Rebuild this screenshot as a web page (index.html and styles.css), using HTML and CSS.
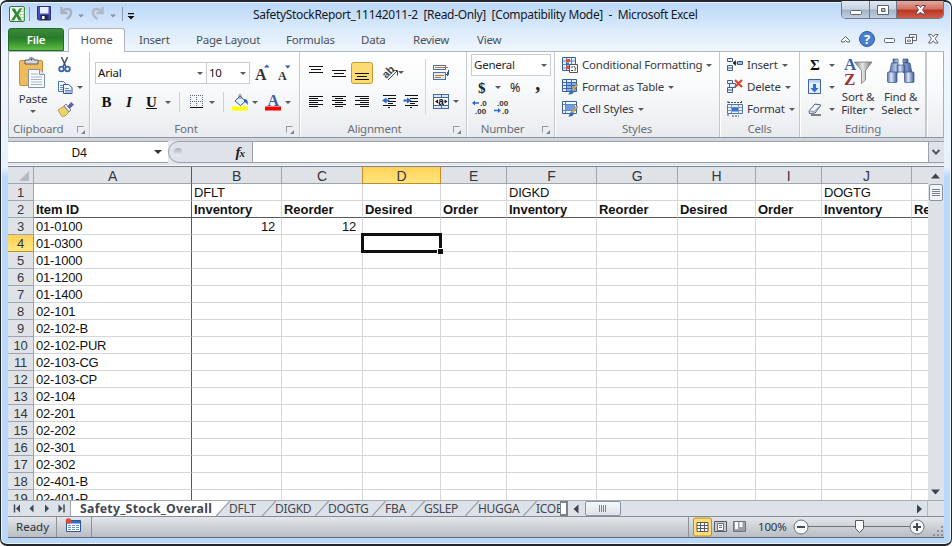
FILE: index.html
```html
<!DOCTYPE html>
<html lang="en">
<head>
<meta charset="utf-8">
<title>SafetyStockReport_11142011-2</title>
<link rel="stylesheet" href="styles.css">
</head>
<body>
<div class="window">
  <header class="titlebar">
    <div class="quick">
      <svg width="128" height="24" viewBox="0 0 128 24">
        <rect x="1.500" y="3.500" width="15" height="15" rx="1.500" fill="#f3faef" stroke="#2f7d32"/>
        <path d="M12 6h4v11h-4z" fill="#fff" stroke="#8dbb86" stroke-width=".7"/>
        <path d="M12 8.500h4M12 11.500h4M12 14.500h4" stroke="#8dbb86" stroke-width=".7"/>
        <path d="M3.500 5.500h3.500l2 4 2.500-4h2.500l-3.500 6 3.500 6h-3.500l-2-4-2.500 4h-3l4-6z" fill="#318a36"/>
        <path d="M21.500 4v14" stroke="#8c99a8"/>
        <path d="M29.500 3.500h13v13.500h-12l-1-1z" fill="#4650b4" stroke="#2d3382"/>
        <path d="M32 4h8.500v6.500h-8.500z" fill="#e8f0fb"/><path d="M32.500 12h8v5h-8z" fill="#26294f"/><path d="M34 13h2.500v3h-2.500z" fill="#fff"/>
        <path d="M53.500 4v6h6M54 9.500c3-5 9-4.500 9 0 0 3-2 5-4.500 6.500" fill="none" stroke="#a9b2be" stroke-width="2.500"/>
        <path d="M70 11.500h6l-3 3z" fill="#8593a5"/>
        <path d="M94.500 4v6h-6M94 9.500c-3-5-9-4.500-9 0 0 3 2 5 4.500 6.500" fill="none" stroke="#b2bac5" stroke-width="2.500"/>
        <path d="M102 11.500h6l-3 3z" fill="#8593a5"/>
        <path d="M114.500 4v14" stroke="#8c99a8"/>
        <path d="M120 10h6v1.300h-6zM119.500 13h7l-3.500 3.500z" fill="#111"/>
      </svg>
    </div>
    <h1><span class="t-title">SafetyStockReport_11142011-2&nbsp; [Read-Only]&nbsp; [Compatibility Mode]&nbsp; -&nbsp; Microsoft Excel</span></h1>
    <div class="winbtns">
      <button class="wb"><svg width="27" height="18"><rect x="8.500" y="9.500" width="11" height="4" rx="1" fill="#fff" stroke="#5b6474"/></svg></button>
      <button class="wb"><svg width="26" height="18"><path d="M7.500 4.500h11v9h-11zM11.500 7.500h3.500v3h-3.500z" fill="#fff" fill-rule="evenodd" stroke="#5b6474"/></svg></button>
      <button class="wb close"><svg width="46" height="18"><path d="M18.500 4.500h3.500l1.500 2 1.500-2h3.500l-3 4.200 3 4.300h-3.500l-1.500-2-1.500 2h-3.500l3-4.300z" fill="#fff" stroke="#6b4550"/></svg></button>
    </div>
  </header>

  <nav class="tabs">
    <a class="file"><span>File</span></a>
    <a class="on"><span>Home</span></a>
    <a class="i1">Insert</a><a class="i2">Page Layout</a><a class="i3">Formulas</a><a class="i4">Data</a><a class="i5">Review</a><a class="i6">View</a>
    <div class="docbtns">
      <svg width="106" height="20" viewBox="0 0 106 20">
        <path d="M3.500 12.500l4-4 4 4v1.500h-2.500l-1.500-1.500-1.500 1.500h-2.500z" fill="#fff" stroke="#5d6775"/>
        <circle cx="29" cy="11" r="7.500" fill="#4a7fce" stroke="#2c5ba7"/>
        <text x="29" y="15.800" text-anchor="middle" class="help">?</text>
        <rect x="46.500" y="10.500" width="10" height="4" rx="1" fill="#fff" stroke="#5d6775"/>
        <path d="M71.500 6.500h7v6h-7z" fill="#fff" stroke="#5d6775"/><path d="M73.500 8.500h3v1.500h-3z" fill="#5d6775"/>
        <path d="M67.500 9.500h7v6h-7z" fill="#fff" stroke="#5d6775"/><path d="M69.500 12h3v1.500h-3z" fill="#fff" stroke="#5d6775" stroke-width=".8"/>
        <path d="M90.500 6.500h3l1.800 2.300 1.800-2.300h3l-3 4.200 3 4.300h-3l-1.800-2.300-1.800 2.300h-3l3-4.300z" fill="#fff" stroke="#5d6775"/>
      </svg>
    </div>
  </nav>

  <section class="ribbon">
    <div class="group clipboard">
      <div class="body">
        <div class="big">
          <svg width="28" height="33" viewBox="0 0 28 33">
            <rect x=".5" y="3.500" width="23" height="25" rx="1.500" fill="#eebb5d" stroke="#c98f38"/>
            <path d="M6 7V3h4c0-3 5-3 5 0h4v4z" fill="#d5d8dc" stroke="#5a5f66"/><circle cx="12.500" cy="2.500" r="1" fill="#444"/>
            <path d="M9.500 12.500h11l5 5v13h-16z" fill="#f8fbff" stroke="#8493a8"/><path d="M20.500 12.500v5h5" fill="#dfe8f3" stroke="#8493a8"/>
            <path d="M12 17h7M12 20h11M12 22.500h11M12 25h11M12 27.500h11" stroke="#a5b4c8"/>
          </svg>
          <span class="t-paste">Paste</span>
          <i class="arr"></i>
        </div>
        <div class="stack">
          <div><svg width="16" height="18" viewBox="0 0 16 18"><path d="M4.500 1l4.500 10M10.500 1l-4.500 10" stroke="#46566d" stroke-width="1.600"/><circle cx="4.500" cy="13" r="2.300" fill="none" stroke="#3862b0" stroke-width="1.800"/><circle cx="10.500" cy="13" r="2.300" fill="none" stroke="#3862b0" stroke-width="1.800"/></svg></div>
          <div><svg width="16" height="16" viewBox="0 0 16 16"><path d="M1.500 2.500h5l3 3v7h-8z" fill="#f4f9ff" stroke="#4d75b8"/><path d="M3 6.500h4M3 8.500h5M3 10.500h5" stroke="#6b8fc9"/><path d="M6.500 5.500h5l3.500 3v6h-8.500z" fill="#f4f9ff" stroke="#31579c"/><path d="M8 9.500h4M8 11.500h6M8 13h6" stroke="#5f84c1"/></svg><i class="arr"></i></div>
          <div><svg width="17" height="16" viewBox="0 0 17 16"><path d="M1 9l6-4 5 6-4 4-3 .5z" fill="#ecd36c" stroke="#ad8b2f" stroke-width=".8"/><path d="M7 5l2-2 5 6-2 2z" fill="#eef1f7" stroke="#5b6478" stroke-width=".8"/><path d="M11 5.500l3-4 2.500 2.200-3.800 3.500z" fill="#6265a8" stroke="#3e4280" stroke-width=".7"/></svg></div>
        </div>
      </div>
      <footer><span>Clipboard</span><i class="launch"></i></footer>
    </div>

    <div class="group font">
      <div class="body col">
        <div class="line one">
          <div class="combo face"><span>Arial</span><i class="arr"></i></div><div class="combo size"><span>10</span><i class="arr"></i></div>
          <svg class="grow" width="18" height="20" viewBox="0 0 18 20"><text x="1" y="17" class="ser" font-size="16">A</text><path d="M10 4.500h5.500l-2.700-3z" fill="#315a9f"/></svg>
          <svg class="shrink" width="16" height="20" viewBox="0 0 16 20"><text x="1" y="17" class="ser" font-size="12">A</text><path d="M8 2.500h5.500l-2.700 3z" fill="#315a9f"/></svg>
        </div>
        <div class="line two">
          <b class="g bb">B</b><b class="g it">I</b><b class="g un">U</b><i class="arr"></i><i class="vr"></i>
          <svg class="border" width="14" height="14" viewBox="0 0 14 14" shape-rendering="crispEdges"><path d="M.5 0v12M6.500 0v12M12.500 0v12M0 .5h13M0 6.500h13" stroke="#5f6c85" stroke-dasharray="1 1"/><path d="M0 12.500h13" stroke="#111" stroke-width="1.500"/></svg>
          <i class="arr"></i><i class="vr v2"></i>
          <svg class="fill" width="18" height="17" viewBox="0 0 18 17"><path d="M3 7l5-5 5.500 5-5 4.500z" fill="#e7f0fb" stroke="#365b90"/><path d="M7 5V1.500c0-1.500 2-1.500 2 0V5" fill="none" stroke="#6e7b8c"/><path d="M12 5c3 0 4.500 2 3.500 6-1-2-2-3-3.500-3z" fill="#2f62b4"/><path d="M0 12.500h16v4H0z" fill="#ff0"/></svg>
          <i class="arr a3"></i>
          <svg class="color" width="17" height="17" viewBox="0 0 17 17"><text x="2.500" y="11.500" class="ser blue" font-size="16">A</text><path d="M0 12.500h16v4H0z" fill="#f00"/></svg>
          <i class="arr a4"></i>
        </div>
      </div>
      <footer><span>Font</span><i class="launch"></i></footer>
    </div>

    <div class="group align">
      <div class="body">
        <svg width="154" height="66" viewBox="0 0 154 66" shape-rendering="crispEdges">
          <rect x="46.500" y="8.500" width="21" height="21" rx="2" fill="#fddb73" stroke="#c29a35" shape-rendering="auto"/>
          <g stroke="#111">
            <path d="M4 12.500h14M6 15.500h10M4 18.500h14"/>
            <path d="M27 16.500h14M29 19.500h10M27 22.500h14"/>
            <path d="M50 19.500h14M52 22.500h10M50 25.500h14"/>
            <path d="M4 42.500h14M4 44.500h9M4 46.500h14M4 48.500h9M4 50.500h14M4 52.500h9"/>
            <path d="M27 42.500h14M30 44.500h8M27 46.500h14M30 48.500h8M27 50.500h14M30 52.500h8"/>
            <path d="M50 42.500h14M55 44.500h9M50 46.500h14M55 48.500h9M50 50.500h14M55 52.500h9"/>
            <path d="M78 41.500h13M83 44h8M83 47h8M83 49.500h5M78 51.500h13M83 53.500h2"/>
            <path d="M100 41.500h13M105 44h8M105 47h8M105 49.500h5M100 51.500h13M105 53.500h2"/>
          </g>
          <g shape-rendering="auto">
            <text x="77" y="21" class="ab" transform="rotate(-45 84 18)">ab</text>
            <path d="M83 26l9-9M87.500 16.500h5v5" fill="none" stroke="#444"/>
            <path d="M81.500 43.500v2h3v2h-3v2l-4.500-3z" fill="#2f68c4"/><path d="M102 43.500v2h-3.500v2h3.500v2l4.500-3z" fill="#2f68c4"/>
          </g>
          <path d="M93 17h6l-3 3z" fill="#555c66" shape-rendering="auto"/>
          <path d="M120.500 5v55" stroke="#d3d7dc"/>
          <rect x="128.500" y="11.500" width="12" height="4" fill="#f0f6fc" stroke="#4b72a8"/><path d="M130 13.500h13" stroke="#c6753a"/>
          <rect x="128.500" y="18.500" width="12" height="7" fill="#e0ecfa" stroke="#4b72a8"/><path d="M130 21h9M130 23.500h6" stroke="#c6753a"/><path d="M143.500 16v4h-3M142 18v4" fill="none" stroke="#315a9f"/>
          <rect x="128.500" y="40.500" width="15" height="14" fill="#dce8f5" stroke="#446a9b"/><path d="M129 43.500h14M129 51.500h14M136.500 41v2M136.500 52v2" stroke="#446a9b"/>
          <rect x="129" y="44" width="14" height="7" fill="#fff"/>
          <g shape-rendering="auto"><text x="133.300" y="50.500" class="aa">a</text><path d="M133 45.500v4l-3-2zM139.500 45.500v4l3-2z" fill="#111"/><path d="M148 46h6l-3 3z" fill="#555c66"/></g>
        </svg>
      </div>
      <footer><span>Alignment</span><i class="launch"></i></footer>
    </div>

    <div class="group number">
      <div class="body col">
        <div class="combo fmt"><span>General</span><i class="arr"></i></div>
        <div class="line n2"><b class="ser dollar">$</b><i class="arr"></i><span class="pct">%</span><b class="ser comma">,</b></div>
        <svg width="42" height="16" viewBox="0 0 42 16"><text x="9" y="7" class="dec">.0</text><text x="4" y="14.500" class="dec">.00</text><path d="M1 4l3-2.500v1.700h4v1.600H4v1.700z" fill="#2f68c4"/><text x="26" y="7" class="dec">.00</text><text x="31" y="14.500" class="dec">.0</text><path d="M30 11.500l-3-2.500v1.700h-4v1.600h4v1.700z" fill="#2f68c4"/></svg>
      </div>
      <footer><span>Number</span><i class="launch"></i></footer>
    </div>

    <div class="group styles">
      <div class="body col rows">
        <div><svg width="16" height="16" viewBox="0 0 16 16"><path d="M.5.500h13v13H.5z" fill="#e6effb" stroke="#385f9e"/><path d="M1 4h12M1 7.500h12M1 11h12M4.500 1v12M9.500 1v12" stroke="#6387bd"/><path d="M4 2h4v3H4zM4 9h3v3H4z" fill="#db4f3e"/><path d="M4 5.500h3v3H4z" fill="#3c6fc4"/><path d="M7.500 7.500h8v8h-8z" fill="#fff" stroke="#555"/><path d="M9 10h2M12 9l2 3M9 13.500h2M12 13h2" stroke="#444"/></svg><span class="s1">Conditional Formatting</span><i class="arr"></i></div>
        <div><svg width="16" height="16" viewBox="0 0 16 16"><path d="M.5.500h14v12H.5z" fill="#e6effb" stroke="#385f9e"/><path d="M5 4h9v8H5z" fill="#86aee3"/><path d="M1 3.500h13M1 6.500h13M1 9.500h13M4.500 1v11M9.500 1v11" stroke="#3c68ab"/><path d="M14.500 5L16 6l-5 6-2-1z" fill="#d9b15b" stroke="#8f7134" stroke-width=".5"/><path d="M9 11l3 1.500c-1 3-4 3-6 3 2-1 1-3 3-4.500z" fill="#3568bd"/></svg><span class="s2">Format as Table</span><i class="arr"></i></div>
        <div><svg width="16" height="16" viewBox="0 0 16 16"><path d="M.5.500h14v12H.5z" fill="#f3f7fc" stroke="#385f9e"/><path d="M3 4h10v5H3z" fill="#6e9ee0"/><path d="M1 3.500h13M1 9.500h13M3.500 1v11" stroke="#6387bd"/><path d="M14.500 5L16 6l-5 6-2-1z" fill="#d9b15b" stroke="#8f7134" stroke-width=".5"/><path d="M9 11l3 1.500c-1 3-4 3-6 3 2-1 1-3 3-4.500z" fill="#3568bd"/></svg><span class="s3">Cell Styles</span><i class="arr"></i></div>
      </div>
      <footer><span>Styles</span></footer>
    </div>

    <div class="group cells">
      <div class="body col rows">
        <div><svg width="16" height="16" viewBox="0 0 16 16"><path d="M.5 1.500h5v3h-5zM.5 8.500h5v5h-5zM.5 11h5" fill="#e8f1fc" stroke="#41618f"/><path d="M10.500 4.500h5v3h-5z" fill="#9dbde8" stroke="#31579c"/><path d="M10 6H8M8.500 3.500v5L6 6z" fill="#111" stroke="#111" stroke-width=".5"/></svg><span class="c1">Insert</span><i class="arr"></i></div>
        <div><svg width="16" height="16" viewBox="0 0 16 16"><path d="M.5 1.500h5v3h-5zM2.500 4.500h6v4h-6zM.5 8.500h5v5h-5zM.5 11h5" fill="#e8f1fc" stroke="#41618f"/><path d="M8 1l7 7M15 1L8 8" stroke="#e5402c" stroke-width="2.200"/></svg><span class="c2">Delete</span><i class="arr"></i></div>
        <div><svg width="16" height="16" viewBox="0 0 16 16"><path d="M.5 3.500h15v9H.5z" fill="#e8f1fc" stroke="#5475a6"/><path d="M1 6.500h14M1 9.500h14M4.500 4v8M11.500 4v8" stroke="#7c9aca"/><path d="M5 6.500h6v4H5z" fill="#3c74d4"/><path d="M1 1.500h14M1 0v3M14.500 0v3M1 13v2M5 15h7" stroke="#334761" stroke-dasharray="2 1"/></svg><span class="c3">Format</span><i class="arr"></i></div>
      </div>
      <footer><span>Cells</span></footer>
    </div>

    <div class="group editing">
      <div class="body">
        <div class="stack edit">
          <div><b class="sigma">Σ</b><i class="arr"></i></div>
          <div><svg width="14" height="16" viewBox="0 0 14 16"><path d="M.5.500h12v14H.5z" fill="#e5effc" stroke="#3c65a5"/><path d="M1 1h11v2.500H1z" fill="#b9d0ee"/><path d="M5 5h3v4h2.500l-4 4.500-4-4.500H5z" fill="#2f6bd0"/></svg><i class="arr"></i></div>
          <div><svg width="14" height="14" viewBox="0 0 14 14"><path d="M1 9l6-7 6 1-6 8-5.500.5z" fill="#f3f6fa" stroke="#50607a"/><path d="M1 9l5 .5 6.500-6" fill="none" stroke="#8593aa"/><path d="M3 13h10" stroke="#111"/></svg><i class="arr"></i></div>
        </div>
        <div class="big sort">
          <svg width="30" height="30" viewBox="0 0 30 30"><defs><linearGradient id="fn"><stop offset="0" stop-color="#777"/><stop offset=".45" stop-color="#e4e4e4"/><stop offset="1" stop-color="#777"/></linearGradient></defs><text x="1" y="13.500" class="ser az blue">A</text><text x="1" y="28.500" class="ser az red">Z</text><path d="M11.500 6h17.500l-6.500 8.500V24l-4 3.500v-13z" fill="url(#fn)" stroke="#777" stroke-width=".8"/></svg>
          <span class="t-b1">Sort &amp;</span><span class="t-b2">Filter <i class="arr"></i></span>
        </div>
        <div class="big find">
          <svg width="30" height="30" viewBox="0 0 30 30"><defs><linearGradient id="bn"><stop offset="0" stop-color="#5876b0"/><stop offset=".4" stop-color="#dbe6f8"/><stop offset="1" stop-color="#3c5c9b"/></linearGradient></defs><g fill="url(#bn)" stroke="#385488" stroke-width=".7"><path d="M7 3h5v4H7zM17 3h5v4h-5z"/><path d="M5.500 7h6.500v10H3.500zM17.500 7H24l2 10h-8.500z"/><rect x="11" y="9" width="8" height="7"/><rect x="1.500" y="16" width="9.500" height="10.500" rx="1"/><rect x="18.500" y="16" width="9.500" height="10.500" rx="1"/></g></svg>
          <span class="t-b3">Find &amp;</span><span class="t-b4">Select <i class="arr"></i></span>
        </div>
      </div>
      <footer><span>Editing</span></footer>
    </div>
    <div class="group rest"></div>
  </section>

  <section class="formula">
    <div class="namebox"><span>D4</span><i class="arr"></i></div>
    <div class="fx"><i class="dot"></i><em>f<small>x</small></em></div>
    <div class="input"></div>
    <div class="expand"><svg width="14" height="20"><path d="M3.500 8l3.500 3.500L10.500 8" fill="none" stroke="#4b5563" stroke-width="2"/></svg></div>
  </section>

  <main class="work">
    <div class="sheet" id="sheet"></div>
    <div class="vscroll">
      <svg width="16" height="17"><path d="M3 11.500h9l-4.500-5z" fill="#3d434c"/></svg>
      <div class="thumb"><i></i></div>
      <svg class="down" width="16" height="16"><path d="M3 5.500h9l-4.500 5z" fill="#3d434c"/></svg>
    </div>
  </main>

  <div class="sheetbar">
    <svg class="navs" width="63" height="16"><path d="M6.500 3.500v8M56 3.500v8" stroke="#3f4856" stroke-width="1.500"/><path d="M12 3.500v8l-4-4zM25.500 3.500v8l-4-4zM37 3.500v8l4-4zM50.500 3.500v8l4-4z" fill="#3f4856"/></svg>
    <div class="sheets">
      <a class="cur"><span>Safety_Stock_Overall</span></a><a>DFLT</a><a>DIGKD</a><a>DOGTG</a><a>FBA</a><a>GSLEP</a><a>HUGGA</a><a>ICOE</a>
    </div>
    <div class="split"></div>
    <div class="hscroll"><svg width="16" height="16"><path d="M10.500 3.500v9l-5-4.500z" fill="#3d434c"/></svg><div class="hthumb"><i></i></div><svg class="right" width="16" height="16"><path d="M6 3.500v9l5-4.500z" fill="#3d434c"/></svg></div>
    <div class="corner"></div>
  </div>

  <footer class="status">
    <span class="ready">Ready</span>
    <div class="rec"><svg width="17" height="16" viewBox="0 0 17 16"><path d="M1.500 2.500h14v11h-14z" fill="#fff" stroke="#2d5499"/><path d="M2 3h13v2.500H2z" fill="#356ac0"/><path d="M3 7.500h11M3 9.500h11M3 11.500h11" stroke="#6e93ce" stroke-dasharray="3 1"/><circle cx="3.500" cy="3" r="2.800" fill="#dc4b36"/></svg></div>
    <div class="views">
      <svg width="66" height="20" viewBox="0 0 66 20"><rect x="1.500" y="1" width="18" height="18" rx="2" fill="#fddd75" stroke="#c08a26"/><path d="M5 5.500h11v9H5zM5 8.500h11M5 11.500h11M8.500 5.500v9M12.500 5.500v9" fill="#fff" stroke="#555c66"/><path d="M22.500 4.500h12v10h-12z" fill="#c9ccd0" stroke="#555c66"/><path d="M25.500 6.500h6v7h-6zM27 8.500h3M27 10.500h3" fill="#fff" stroke="#6b727c"/><path d="M41.500 4.500h12v10h-12z" fill="#9ba0a7" stroke="#6b727c"/><path d="M43 5h3v7h-3zM47.500 5h3v5h-3z" fill="#fff"/></svg>
    </div>
    <span class="pc">100%</span>
    <svg class="zoom" width="134" height="20" viewBox="0 0 134 20"><path d="M16 9.500h102" stroke="#6d747e"/><circle cx="9" cy="10" r="7" fill="#f8f9fb" stroke="#6d747e"/><circle cx="125" cy="10" r="7" fill="#f8f9fb" stroke="#6d747e"/><path d="M5 10h8M121 10h8M125 6v8" stroke="#444b55" stroke-width="2"/><path d="M63.500 3.500h8v8l-4 4-4-4z" fill="#f8f9fb" stroke="#555c66"/></svg>
    <svg class="grip" width="13" height="13"><path d="M10 2h2v2h-2zM10 6h2v2h-2zM10 10h2v2h-2zM6 6h2v2H6zM6 10h2v2H6zM2 10h2v2H2z" fill="#8b929c"/></svg>
  </footer>
</div>
<script src="sheet.js"></script>
</body>
</html>
```
FILE: styles.css
```css
*, *::before, *::after { box-sizing: border-box; }
html, body { margin: 0; width: 952px; height: 546px; overflow: hidden; background: #fff; }
body { font: 11.5px/16px "Noto Sans", "Open Sans", sans-serif; letter-spacing: -.22px; color: #3b4048; }
svg { display: block; flex: none; overflow: visible; letter-spacing: 0; }
button { border: 0; padding: 0; background: none; }

.window {
  width: 952px; height: 546px; padding: 0 6px 6px 6px; display: flex; flex-direction: column;
  border: 1px solid #23262c; border-width: 2px 1px 2px 1px; border-radius: 7px;
  background: linear-gradient(#b9d7f8 0, #d9e9fb 26px, #f1f7fd 50px, #e6f1fc 165px, #b9d8fa 175px, #b9d8fa 100%);
  box-shadow: inset 0 0 0 1px #eef7ff;
}
.titlebar { display: flex; height: 26px; flex: none; }
.quick { width: 246px; padding: 1px 0 0 1px; }
h1 { margin: 0; flex: 1; font-size: 12px; font-weight: 400; line-height: 25px; color: #15181d; white-space: nowrap; }
.t-title { letter-spacing: -.33px; }
.winbtns { display: flex; height: 18px; margin-right: 1px; border: 1px solid #6e7a8b; border-top: 0; border-radius: 0 0 5px 5px; overflow: hidden; margin-top: -1px; }
.wb { background: linear-gradient(#dfe8f3, #c7d3e1 45%, #a3b2c4 50%, #c3d3e4); border-right: 1px solid #6e7a8b; height: 18px; overflow: hidden; }
.close { background: linear-gradient(#e2a99e, #d1705f 45%, #b93425 50%, #d2614b); border: 0; }

.tabs { display: flex; height: 24px; flex: none; color: #4a5059; position: relative; }
.tabs a { padding-top: 4px; height: 24px; flex: none; white-space: nowrap; }
.tabs .file { width: 56px; margin-left: 1px; height: 23px; background: linear-gradient(#3f8b3b, #2a7a2d 40%, #2f8f2c 60%, #63bb48); border: 1px solid #1f6a2c; border-radius: 3px 3px 0 0; color: #fff; text-align: center; padding-top: 3px; font-weight: 600; }
.tabs .on { width: 57px; margin-left: 4px; text-align: center; background: #fff; border: 1px solid #b0b6be; border-bottom: 0; border-radius: 3px 3px 0 0; padding-top: 3px; position: relative; z-index: 2; }
.i1 { width: 57px; margin-left: 14px; }
.i2 { width: 90px; }
.i3 { width: 75px; }
.i4 { width: 52px; }
.i5 { width: 64px; }
.i6 { width: 40px; }
.docbtns { margin-left: auto; margin-right: 1px; }
.help { font: bold 13px "Open Sans"; fill: #fff; }

.ribbon { display: flex; height: 87px; flex: none; margin: -1px 1px 0; background: linear-gradient(#fff, #f9fafb 40%, #e9ecef); border: 1px solid #a8aeb6; border-color: #b0b6be #a8aeb6 #8e949c; }
.group { display: flex; flex-direction: column; border-right: 1px solid #c3c8ce; box-shadow: 1px 0 0 #fff; flex: none; height: 85px; }
.group footer { height: 16px; display: flex; justify-content: center; position: relative; color: #6a7078; }
.body { height: 69px; display: flex; }
.col { flex-direction: column; }
.launch { position: absolute; right: 6px; top: 5px; width: 7px; height: 7px; border: 1px solid #959ba3; border-right-color: transparent; border-bottom-color: transparent; }
.launch::after { content: ""; position: absolute; right: -2px; bottom: -2px; border: 2.5px solid #7d838b; border-top-color: transparent; border-left-color: transparent; }
.arr { display: inline-block; width: 0; height: 0; border: 3px solid transparent; border-top-color: #555c66; border-bottom: 0; flex: none; }
.ser { font-family: "Liberation Serif", serif; font-weight: bold; fill: #333; }
.blue { fill: #3a5fa2; }
.red { fill: #9b3434; }
.az { font-size: 17px; }
.ab { font: bold 11px "Liberation Sans", sans-serif; fill: #444; }
.aa { font: bold 10px "Liberation Sans", sans-serif; fill: #111; }
.dec { font: bold 8px "Liberation Sans", sans-serif; fill: #333; }
.line { display: flex; align-items: center; }

.clipboard { width: 81px; }
.big { display: flex; flex-direction: column; align-items: center; white-space: nowrap; }
.clipboard .big { width: 48px; padding-top: 5px; }
.clipboard .big span { line-height: 16px; margin-top: 1px; }
.clipboard .big .arr { margin-top: 3px; }
.clipboard footer, .number footer { padding-right: 20px; }
.clipboard footer { padding-right: 6px; }
.align footer, .font footer { padding-right: 22px; }
.clipboard .launch { right: 5px; }
.clipboard footer span { margin-right: 0; position: static; padding-right: 0; margin-left: -1px; }
.clipboard footer { padding-right: 0; padding-left: 5px; justify-content: flex-start; }
.number .launch { right: 5px; }
.stack { display: flex; flex-direction: column; padding-top: 2px; }
.stack div { height: 22px; display: flex; align-items: center; }
.clipboard .stack { padding-left: 0; }
.clipboard .stack .arr { margin-left: 4px; }

.font { width: 210px; padding-left: 5px; }
.combo { height: 22px; border: 1px solid #c8ccd2; background: #fff; display: flex; align-items: center; justify-content: space-between; padding: 0 3px 0 2px; color: #111; }
.one { margin-top: 10px; }
.face { width: 112px; }
.size { width: 43px; border-left: 0; }
.grow { margin-left: 4px; }
.shrink { margin-left: 5px; }
.two { height: 24px; margin-top: 6px; }
.g { font: bold 15px/20px "Liberation Serif", serif; color: #111; text-align: center; letter-spacing: 0; }
.bb { width: 23px; }
.it { width: 22px; font-style: italic; }
.un { width: 23px; text-decoration: underline; }
.two .arr { margin-left: 2px; }
.vr { width: 1px; height: 20px; background: #cdd1d6; margin-left: 8px; }
.border { margin-left: 10px; }
.two .border + .arr { margin-left: 5px; }
.fill { margin-left: 8px; }
.two .a3 { margin-left: 2px; }
.color { margin-left: 7px; }
.two .a4 { margin-left: 3px; }

.align { width: 167px; padding-left: 5px; }
.align .body { padding-top: 2px; }
.number { width: 88px; padding-left: 4px; }
.fmt { width: 80px; margin-top: 2px; color: #24282e; }
.n2 { height: 23px; }
.dollar { font-size: 15px; width: 18px; padding-left: 7px; color: #222; letter-spacing: 0; }
.n2 .arr { margin-left: 6px; }
.pct { margin-left: 9px; font-size: 12.5px; color: #222; }
.comma { margin-left: 15px; font-size: 20px; line-height: 10px; margin-top: -9px; color: #222; }

.styles { width: 165px; padding-left: 7px; }
.rows { padding-top: 2px; }
.rows div { height: 22px; display: flex; align-items: center; white-space: nowrap; color: #343a44; }
.rows span { margin-left: 4px; }
.rows .arr { margin-left: 4px; }
.styles footer, .cells footer { padding-right: 7px; }
.cells { width: 80px; padding-left: 7px; }
.editing { width: 126px; padding-left: 8px; }
.editing footer { padding-right: 7px; }
.edit { width: 29px; }
.edit div { justify-content: space-between; padding-right: 2px; }
.sigma { font: bold 15px/16px "Liberation Serif", serif; color: #111; padding-left: 2px; letter-spacing: 0; }
.sort, .find { padding-top: 4px; }
.sort { width: 42px; }
.find { width: 43px; }
.big span { color: #343a44; line-height: 13px; }
.big.sort > svg, .big.find > svg { margin-bottom: 4px; }
.big span .arr { vertical-align: 3px; margin-left: -1px; }

.formula { display: flex; height: 29px; margin: 0 1px; flex: none; background: #e4e8ee; border-bottom: 1px solid #7f858e; border-top: 3px solid #d2d6dc; box-shadow: inset 0 -1px 0 #f5f7fa; }
.formula > div { height: 22px; border-top: 1px solid #9aa0aa; border-bottom: 1px solid #9aa0aa; }
.namebox { width: 160px; background: #fff; display: flex; align-items: center; color: #111; font-family: "Noto Sans"; font-size: 12px; }
.namebox span { width: 142px; text-align: center; padding-top: 2px; }
.namebox .arr { border-width: 4px 4px 0; border-top-color: #333; margin-left: 4px; }
.fx { width: 85px; background: #dfe3e9; border: 1px solid #9aa0aa; border-radius: 12px 0 0 12px; display: flex; justify-content: space-between; align-items: center; padding: 0 8px 0 5px; }
.dot { width: 8px; height: 8px; border-radius: 50%; background: linear-gradient(#a9afb8, #eef1f5); }
.fx em { font: italic bold 15px/18px "Liberation Serif", serif; color: #222; letter-spacing: -1px; }
.fx small { font-size: 11px; }
.input { flex: 1; background: #fff; }
.expand { width: 16px; background: #dfe3e9; border-left: 1px solid #9aa0aa; }

.work { display: flex; height: 333px; margin: 0 1px; flex: none; overflow: hidden; }
.sheet { width: 920px; height: 333px; overflow: hidden; background: #fff; font: 13px/17px "Liberation Sans", Arial, sans-serif; color: #111; position: relative; flex: none; }
.row { display: grid; grid-template-columns: 26px 158px 90px 81px 78px 66px 90px 81px 78px 66px 90px 81px; height: 17px; width: 985px; }
.row > * { height: 17px; border-right: 1px solid #d5d7da; border-bottom: 1px solid #d5d7da; padding: 0 6px 0 2px; white-space: nowrap; letter-spacing: -.2px; }
.row > .h { background: #dfe3e8; border-color: #9ea5ae; text-align: center; padding: 0; color: #33373e; }
.row > .a, .row > .h.a { border-right-color: #55585c; }
.head .h { font-size: 14px; line-height: 18px; }
.row > .hot { background: linear-gradient(#ffd158, #ffe680); border-color: #c58d25; }
.row.head > .hot { box-shadow: -1px 0 0 #c58d25; }
.row.frozen > * { border-bottom-color: #55585c; }
.row.frozen > .h { border-bottom-color: #9ea5ae; }
.row > .bold { font-weight: bold; letter-spacing: -.05px; }
.num { text-align: right; }
.all { position: relative; }
.all::after { content: ""; position: absolute; right: 4px; bottom: 2px; border: 5px solid #b5bbc3; border-top-color: transparent; border-left-color: transparent; }
.sel { position: relative; }
.sel::before { content: ""; position: absolute; left: -2px; top: -2px; width: 81px; height: 20px; border: 3px solid #111; }
.sel::after { content: ""; position: absolute; right: -3px; bottom: -3px; width: 5px; height: 5px; background: #111; box-shadow: -1px -1px 0 #fff; }
.vscroll { width: 16px; background: #dde1e8; display: flex; flex-direction: column; flex: none; }
.thumb { width: 14px; height: 17px; margin: 0 1px; border: 1px solid #8b94a1; border-radius: 2px; background: #f1f4f8; padding: 4px 2px; }
.thumb i { display: block; height: 7px; background: repeating-linear-gradient(#7c8490 0 1px, transparent 1px 2px); }
.down { margin-top: auto; }

.sheetbar { display: flex; height: 16px; margin: 0 1px; flex: none; background: #dde1e8; color: #414750; overflow: hidden; border-top: 1px solid #a5abb5; }
.navs { border-right: 1px solid #9ea5ae; }
.sheets { display: grid; grid-template-columns: 145px 46px 53px 57px 39px 54px 58px 37px; width: 489px; overflow: hidden; flex: none; font-size: 12px; }
.sheets a { position: relative; padding-left: 13px; white-space: nowrap; line-height: 15px; letter-spacing: -.3px; }
.sheets a::before { content: ""; position: absolute; left: -3px; top: 7px; width: 20px; height: 1px; background: #8d949e; transform: rotate(-48deg); }
.sheets .cur { background: #fff; padding-left: 9px; font-weight: bold; letter-spacing: .28px; font-size: 12.3px; }
.sheets .cur::before { display: none; }
.sheets .cur::after { content: ""; position: absolute; left: 100%; top: 0; border-top: 15px solid #fff; border-right: 14px solid transparent; }
.split { width: 8px; border: 2px solid #7c838e; border-left-width: 1px; background: #fff; }
.hscroll { flex: 1; display: flex; }
.hthumb { width: 36px; height: 15px; margin-left: 1px; border: 1px solid #8b94a1; border-radius: 2px; background: linear-gradient(#f6f8fa, #dde2e9); padding: 3px 13px; }
.hthumb i { display: block; height: 7px; width: 8px; background: repeating-linear-gradient(90deg, #7c8490 0 1px, transparent 1px 2px); }
.right { margin-left: auto; }
.corner { width: 17px; border-left: 1px solid #b5bbc3; }

.status { display: flex; align-items: center; height: 22px; margin: 0 1px; flex: none; background: linear-gradient(#e3e6ea, #cfd3d8 45%, #b9bec4); border-top: 1px solid #858c96; border-bottom: 1px solid #5f6b7b; color: #2e333b; font-size: 11.5px; }
.ready { width: 49px; padding-left: 8px; border-right: 1px solid #8b929c; letter-spacing: 0; line-height: 20px; }
.rec { padding-left: 8px; width: 35px; height: 20px; border-right: 1px solid #8b929c; padding-top: 1px; }
.views { margin-left: auto; border-left: 1px solid #8b929c; padding-left: 3px; }
.pc { width: 34px; letter-spacing: -.15px; }
.zoom { width: 134px; }
.grip { align-self: flex-end; margin-left: 5px; }
```
FILE: sheet.js
```js
const letters = ["A", "B", "C", "D", "E", "F", "G", "H", "I", "J", ""];
const items = ["01-0100", "01-0300", "01-1000", "01-1200", "01-1400", "02-101", "02-102-B", "02-102-PUR",
  "02-103-CG", "02-103-CP", "02-104", "02-201", "02-202", "02-301", "02-302", "02-401-B", "02-401-P"];
const rows = [
  ["", "DFLT", "", "", "", "DIGKD", "", "", "", "DOGTG", ""],
  ["Item ID", "Inventory", "Reorder", "Desired", "Order", "Inventory", "Reorder", "Desired", "Order", "Inventory", "Reorder"],
  ...items.map((id, i) => [id, i === 0 ? "12" : "", i === 0 ? "12" : "", "", "", "", "", "", "", "", ""])
];
const sheet = document.getElementById("sheet");

function addRow(cls, label, labelCls, cells, cellCls) {
  const row = document.createElement("div");
  row.className = "row " + cls;
  const add = (text, c) => {
    const d = document.createElement("div");
    d.className = c;
    d.textContent = text;
    row.append(d);
  };
  add(label, labelCls);
  cells.forEach((t, c) => add(t, cellCls(t, c) + (c === 0 ? " a" : "")));
  sheet.append(row);
}

addRow("head", "", "h all", letters, (t, c) => c === 3 ? "h hot" : "h");
rows.forEach((cells, r) => addRow(r === 1 ? "frozen" : "", r + 1, r === 3 ? "h hot" : "h", cells, (t, c) => {
  if (r === 1) return "bold";
  if (r === 3 && c === 3) return "sel";
  return c > 0 && r > 1 && t ? "num" : "";
}));
```
